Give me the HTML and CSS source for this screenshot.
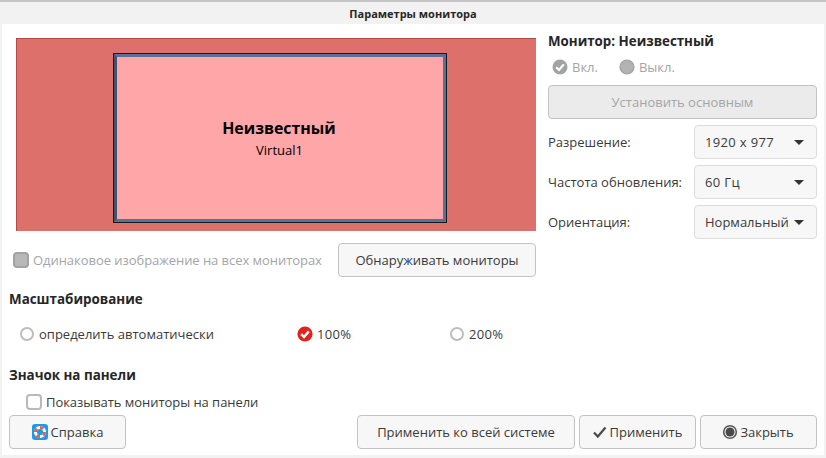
FILE: index.html
```html
<!DOCTYPE html>
<html lang="ru">
<head>
<meta charset="utf-8">
<title>Параметры монитора</title>
<link rel="stylesheet" href="styles.css">
</head>
<body>
<div class="strip"></div>
<div class="window">
  <div class="titlebar">Параметры монитора</div>
  <div class="content">
    <div class="top">
      <div class="left">
        <div class="preview">
          <div class="monitor">
            <div class="mon-name">Неизвестный</div>
            <div class="mon-out">Virtual1</div>
          </div>
        </div>
        <div class="mirror-row">
          <label class="opt disabled narrow"><span class="box box-disabled"></span>Одинаковое изображение на всех мониторах</label>
          <button class="btn detect">Обнаруживать мониторы</button>
        </div>
      </div>
      <div class="right">
        <div class="mon-title">Монитор: Неизвестный</div>
        <div class="onoff">
          <label class="opt disabled on"><svg class="ico" viewBox="0 0 16 16"><circle cx="8" cy="8" r="7.5" fill="#a3a3a3"/><path d="M4.2 8.2 7 11l4.8-5.6" fill="none" stroke="#fff" stroke-width="2.2"/></svg>Вкл.</label>
          <label class="opt disabled off"><svg class="ico" viewBox="0 0 16 16"><circle cx="8" cy="8" r="7" fill="#b3b3b3" stroke="#a0a0a0" stroke-width="1.2"/></svg>Выкл.</label>
        </div>
        <button class="btn primary" disabled>Установить основным</button>
        <div class="field"><span class="field-label">Разрешение:</span><div class="combo"><span class="num">1920 x 977</span><i class="arrow"></i></div></div>
        <div class="field"><span class="field-label">Частота обновления:</span><div class="combo"><span class="num">60 Гц</span><i class="arrow"></i></div></div>
        <div class="field"><span class="field-label">Ориентация:</span><div class="combo"><span>Нормальный</span><i class="arrow"></i></div></div>
      </div>
    </div>
    <h2 class="heading scale-h">Масштабирование</h2>
    <div class="scale">
      <label class="opt radio-opt"><span class="radio"></span>определить автоматически</label>
      <label class="opt"><svg class="ico" viewBox="0 0 16 16"><circle cx="8" cy="8" r="7.6" fill="#e0231c"/><path d="M4.2 8.2 7 11l4.8-5.6" fill="none" stroke="#fff" stroke-width="2.4"/></svg><span class="num">100%</span></label>
      <label class="opt radio-opt"><span class="radio"></span><span class="num">200%</span></label>
    </div>
    <h2 class="heading panel-h">Значок на панели</h2>
    <label class="opt panel-opt narrow"><span class="box"></span>Показывать мониторы на панели</label>
    <div class="actions">
      <button class="btn help"><svg class="btn-ico" viewBox="0 0 16 16"><rect width="16" height="16" rx="3" fill="#1e9be8"/><circle cx="8" cy="8" r="4.6" fill="none" stroke="#fff" stroke-width="3"/><path d="M3.4 8a4.6 4.6 0 0 1 1.4-3.3M8 3.4a4.6 4.6 0 0 1 3.3 1.4M12.6 8a4.6 4.6 0 0 1-1.4 3.3M8 12.6a4.6 4.6 0 0 1-3.3-1.4" fill="none" stroke="#e8604c" stroke-width="3"/></svg>Справка</button>
      <span class="spacer"></span>
      <button class="btn system">Применить ко всей системе</button>
      <button class="btn act"><svg class="btn-ico" viewBox="0 0 16 16"><path d="M2 8.5 5.8 12.5 13.5 3.5" fill="none" stroke="#4a4a4a" stroke-width="2.2"/></svg>Применить</button>
      <button class="btn act"><svg class="btn-ico" viewBox="0 0 16 16"><circle cx="8" cy="8" r="6.3" fill="none" stroke="#585858" stroke-width="1.6"/><circle cx="8" cy="8" r="4.5" fill="#4a4a4a"/></svg>Закрыть</button>
    </div>
  </div>
</div>
</body>
</html>
```

FILE: styles.css
```css
* { box-sizing: border-box; }
html, body { margin: 0; height: 100%; }
body {
  width: 826px;
  height: 458px;
  overflow: hidden;
  background: #f2f2f2;
  font-family: "Open Sans", "Noto Sans", sans-serif;
  font-size: 13px;
  color: #3a3a3a;
}
.strip { height: 2px; background: #c4c4c4; }
.window { display: flex; flex-direction: column; padding: 0 2px; }
.titlebar {
  height: 22px;
  line-height: 23px;
  text-align: center;
  font-size: 11px;
  font-weight: 700;
  color: #262626;
}
.content {
  background: #fff;
  height: 431px;
  padding: 14px 7px 0 7px;
}
.top { display: flex; padding-left: 7px; }
.left { width: 520px; flex: none; }
.preview {
  height: 193px;
  background: #dd706a;
  border-top: 1px solid #b54a45;
  border-left: 1px solid #b54a45;
  padding: 15px 0 0 97px;
}
.monitor {
  height: 168px;
  width: 332px;
  background: #ffa6a9;
  border: 3px solid #5a7096;
  border-left-color: #3f5270;
  box-shadow: 0 0 0 1px #14181f;
  display: flex;
  flex-direction: column;
  align-items: center;
  justify-content: center;
  color: #000;
}
.mon-name { font-size: 15.9px; font-weight: 700; line-height: 22px; margin-left: -2px; }
.mon-out { font-size: 13px; line-height: 18px; margin-left: -1px; margin-top: 2px; }
.mirror-row {
  display: flex;
  align-items: center;
  justify-content: space-between;
  margin-top: 12px;
  margin-left: -3px;
}
.opt { display: inline-flex; align-items: center; gap: 4px; white-space: nowrap; }
.radio-opt { gap: 5px; padding-left: 1px; }
.narrow { letter-spacing: -0.05px; }
.num { letter-spacing: 0.35px; }
.disabled { color: #a5a5a5; }
.box {
  width: 16px;
  height: 16px;
  border: 2px solid #b9b9b9;
  border-radius: 4px;
  background: #fff;
  flex: none;
}
.box-disabled { background: #b8b8b8; border-color: #a3a3a3; }
.radio {
  width: 14px;
  height: 14px;
  border: 2px solid #bdbdbd;
  border-radius: 50%;
  flex: none;
}
.ico { width: 16px; height: 16px; flex: none; }
.btn {
  height: 34px;
  border: 1px solid #c3c3c3;
  border-radius: 4px;
  background: #f7f7f7;
  font: inherit;
  color: #3a3a3a;
  display: inline-flex;
  align-items: center;
  justify-content: center;
  gap: 3px;
  padding: 0;
}
.detect { width: 198px; }
.right { width: 269px; margin-left: 12px; flex: none; }
.mon-title { font-size: 13.33px; font-weight: 700; color: #262626; line-height: 19px; margin-top: -6px; }
.onoff { display: flex; gap: 21px; padding-left: 4px; margin-top: 6px; height: 20px; align-items: center; }
.primary {
  width: 269px;
  margin-top: 8px;
  background: #ebebeb;
  color: #a5a5a5;
  display: flex;
}
.field { display: flex; align-items: center; justify-content: space-between; height: 34px; margin-top: 6px; }
.combo {
  width: 123px;
  height: 34px;
  border: 1px solid #dcdcdc;
  border-radius: 4px;
  background: #f7f7f7;
  display: flex;
  align-items: center;
  justify-content: space-between;
  padding: 0 12px 0 10px;
}
.arrow {
  width: 0;
  height: 0;
  border-left: 5px solid transparent;
  border-right: 5px solid transparent;
  border-top: 5px solid #333;
}
.heading { margin: 0; font-size: 13.4px; font-weight: 700; color: #262626; line-height: 19px; }
.scale-h { margin-top: 13px; }
.scale {
  display: grid;
  grid-template-columns: 278px 152px auto;
  height: 20px;
  align-items: center;
  margin-top: 15px;
  padding-left: 10px;
}
.panel-h { margin-top: 22px; }
.panel-opt { margin-left: 17px; margin-top: 8px; height: 18px; display: flex; }
.actions { display: flex; gap: 4px; margin-top: 4px; }
.spacer { flex: 1; }
.help { width: 117px; }
.system { width: 218px; }
.act { width: 117px; gap: 2px; padding-right: 1px; }
.btn-ico { width: 16px; height: 16px; flex: none; }
```
